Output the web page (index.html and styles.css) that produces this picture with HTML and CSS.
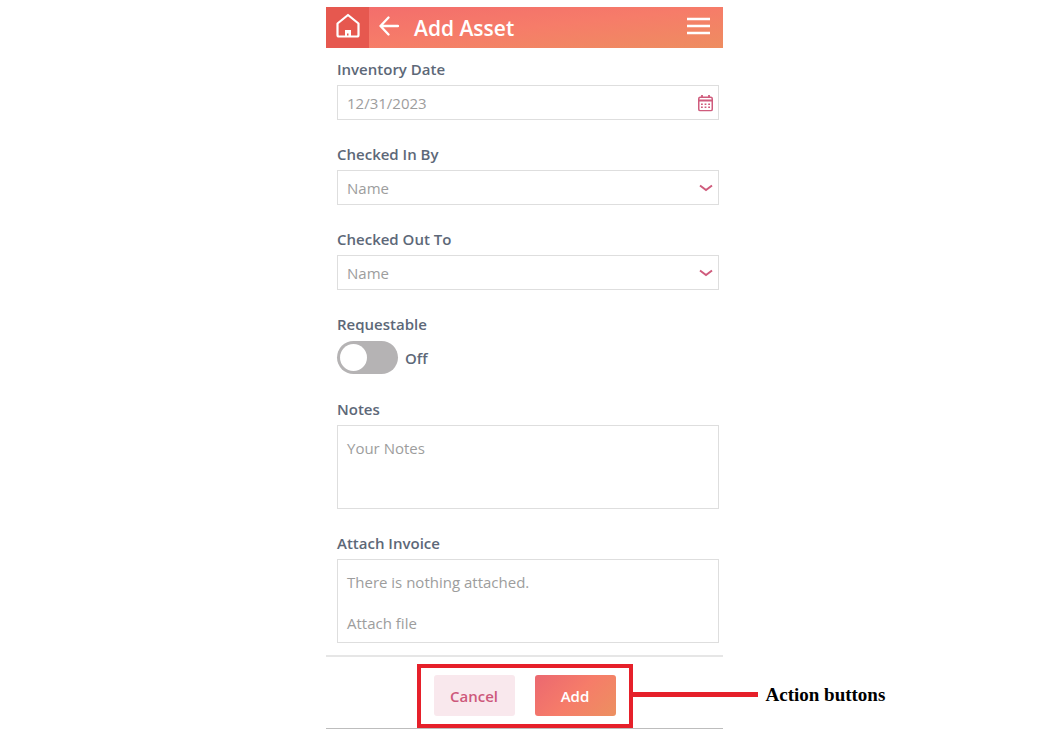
FILE: index.html
```html
<!DOCTYPE html>
<html lang="en">
<head>
    <meta charset="UTF-8">
    <meta name="viewport" content="width=device-width, initial-scale=1.0">
    <title>Add Asset</title>
    <link rel="stylesheet" href="styles.css">
</head>
<body>
    <div class="phone">
        <header class="top-bar">
            <a href="#" class="home" aria-label="Home">
                <svg width="26" height="26" viewBox="0 0 26 26" fill="none" stroke="#fff" stroke-width="2.200" stroke-linejoin="round">
                    <path d="M2.500 10.500 L13 2 L23.500 10.500 V22 Q23.500 23.500 22 23.500 H4 Q2.500 23.500 2.500 22 Z"/>
                    <path d="M10 17 H16 V24 H13.500 V20.500 H12 V24 H10 Z" fill="#fff" stroke="none"/>
                </svg>
            </a>
            <button type="button" class="icon-button" aria-label="Back">
                <svg width="20" height="20" viewBox="0 0 20 20" fill="none" stroke="#fff" stroke-width="2.300" stroke-linecap="round" stroke-linejoin="round">
                    <path d="M19 10 H1.500 M9.500 1.500 L1.500 10 L9.500 18.500"/>
                </svg>
            </button>
            <h1>Add Asset</h1>
            <button type="button" class="icon-button" aria-label="Menu">
                <svg width="23" height="18" viewBox="0 0 23 18" fill="none" stroke="#fff" stroke-width="2.500">
                    <path d="M0 2 H23 M0 9 H23 M0 16 H23"/>
                </svg>
            </button>
        </header>

        <form id="assetForm">
            <div class="fields">
                <div class="field">
                    <label for="inventoryDate">Inventory Date</label>
                    <div class="control">
                        <input type="text" id="inventoryDate" name="inventoryDate" value="12/31/2023">
                        <svg class="control-icon" width="15" height="17" viewBox="0 0 15 17" fill="none" stroke="#cf5b7c">
                            <rect x="0.750" y="2.750" width="13.500" height="13.500" rx="1.500" stroke-width="1.500"/>
                            <path d="M1 6 H14" stroke-width="2"/>
                            <path d="M4 0.500 V3.500 M11 0.500 V3.500" stroke-width="1.800"/>
                            <path d="M3 9.800 H12 M3 12.800 H12" stroke-width="1.600" stroke-dasharray="1.800 1.800"/>
                        </svg>
                    </div>
                </div>

                <div class="field">
                    <label for="checkedInBy">Checked In By</label>
                    <div class="control">
                        <select id="checkedInBy" name="checkedInBy">
                            <option>Name</option>
                        </select>
                        <svg class="control-icon" width="14" height="8" viewBox="0 0 14 8" fill="none" stroke="#cf5b7c" stroke-width="2">
                            <path d="M1 1.500 L7 6 L13 1.500"/>
                        </svg>
                    </div>
                </div>

                <div class="field">
                    <label for="checkedOutTo">Checked Out To</label>
                    <div class="control">
                        <select id="checkedOutTo" name="checkedOutTo">
                            <option>Name</option>
                        </select>
                        <svg class="control-icon" width="14" height="8" viewBox="0 0 14 8" fill="none" stroke="#cf5b7c" stroke-width="2">
                            <path d="M1 1.500 L7 6 L13 1.500"/>
                        </svg>
                    </div>
                </div>

                <div class="field">
                    <label for="requestable">Requestable</label>
                    <div class="switch-row">
                        <input type="checkbox" class="switch" id="requestable" name="requestable">
                        <span id="requestableState">Off</span>
                    </div>
                </div>

                <div class="field">
                    <label for="notes">Notes</label>
                    <textarea id="notes" name="notes" placeholder="Your Notes"></textarea>
                </div>

                <div class="field">
                    <label for="attachFile">Attach Invoice</label>
                    <div class="attachments">
                        <span>There is nothing attached.</span>
                        <button type="button" id="attachFile">Attach file</button>
                    </div>
                </div>
            </div>

            <footer class="actions">
                <div class="highlight">
                    <button type="button" class="button cancel">Cancel</button>
                    <button type="submit" class="button add">Add</button>
                    <div class="callout">Action buttons</div>
                </div>
            </footer>
        </form>
    </div>

    <script>
        const requestable = document.getElementById('requestable');
        const requestableState = document.getElementById('requestableState');

        requestable.addEventListener('change', function() {
            requestableState.textContent = requestable.checked ? 'On' : 'Off';
        });
    </script>
</body>
</html>
```

FILE: styles.css
```css
* {
    box-sizing: border-box;
}
body {
    margin: 0;
    padding: 7px 0;
    background-color: #fff;
    color: #5d6878;
    font-family: "Open Sans", "Noto Sans", sans-serif;
    font-size: 15px;
    line-height: 20px;
}
input, select, textarea, button {
    font: inherit;
    color: inherit;
}
button {
    padding: 0;
    border: none;
    background: none;
    cursor: pointer;
}
svg {
    display: block;
}
.phone {
    max-width: 397px;
    margin: 0 auto;
}
.top-bar {
    display: flex;
    align-items: center;
    height: 41px;
    padding-right: 13px;
    background: linear-gradient(to bottom right, #f36c6c 0%, #f67c69 50%, #ee8d60 100%);
    color: #fff;
}
.home {
    display: flex;
    align-items: center;
    justify-content: center;
    width: 43px;
    height: 100%;
    margin-right: 10px;
    padding-bottom: 3px;
    background-color: #e6584f;
}
.icon-button {
    padding-bottom: 3px;
}
.top-bar h1 {
    flex: 1;
    margin: 0 0 0 15px;
    font-size: 21px;
    font-weight: 600;
}
.fields {
    display: flex;
    flex-direction: column;
    gap: 24px;
    padding: 11px 4px 12px 11px;
}
.field > label {
    display: block;
    margin-bottom: 6px;
    font-weight: 600;
}
.control {
    position: relative;
}
.control input, .control select {
    display: block;
    width: 100%;
    height: 35px;
    padding: 0 32px 0 9px;
    border: 1px solid #dedede;
    border-radius: 0;
    background-color: #fff;
    color: #9d9d9d;
    appearance: none;
}
.control-icon {
    position: absolute;
    top: 50%;
    right: 6px;
    transform: translateY(-50%);
    pointer-events: none;
}
.switch-row {
    display: flex;
    align-items: center;
    gap: 7px;
    height: 35px;
    font-weight: 600;
}
.switch {
    width: 61px;
    height: 33px;
    margin: 0;
    padding: 3px;
    border-radius: 17px;
    background-color: #b5b3b4;
    appearance: none;
    cursor: pointer;
}
.switch::before {
    content: "";
    display: block;
    width: 27px;
    height: 27px;
    border-radius: 50%;
    background-color: #fff;
}
.switch:checked {
    background-color: #f67c69;
}
.switch:checked::before {
    margin-left: auto;
}
textarea, .attachments {
    display: block;
    width: 100%;
    height: 84px;
    padding: 12px 9px;
    border: 1px solid #dedede;
    color: #9d9d9d;
    resize: none;
}
textarea::placeholder {
    color: #9d9d9d;
}
.attachments {
    display: flex;
    flex-direction: column;
    align-items: flex-start;
    gap: 21px;
}
.actions {
    display: flex;
    justify-content: center;
    padding-top: 7px;
    border-top: 2px solid #e6e6e6;
    border-bottom: 1px solid #bdbdbd;
}
.highlight {
    position: relative;
    display: flex;
    gap: 20px;
    padding: 7px 13px 8px;
    border: 4px solid #e6202a;
}
.button {
    width: 81px;
    height: 41px;
    border-radius: 3px;
    font-weight: 600;
}
.cancel {
    background-color: #f9e8ed;
    color: #cd587b;
}
.add {
    background: linear-gradient(135deg, #eb6870 0%, #f67c69 50%, #ec9060 100%);
    color: #fff;
}
/* label with a line leading out of the highlighted box */
.callout {
    position: absolute;
    top: 48%;
    left: 100%;
    display: flex;
    align-items: center;
    gap: 8px;
    margin-left: 4px;
    transform: translateY(-50%);
    color: #000;
    font-family: "Liberation Serif", serif;
    font-size: 19px;
    font-weight: bold;
    white-space: nowrap;
}
.callout::before {
    content: "";
    width: 125px;
    height: 5px;
    background-color: #e6202a;
}
```
